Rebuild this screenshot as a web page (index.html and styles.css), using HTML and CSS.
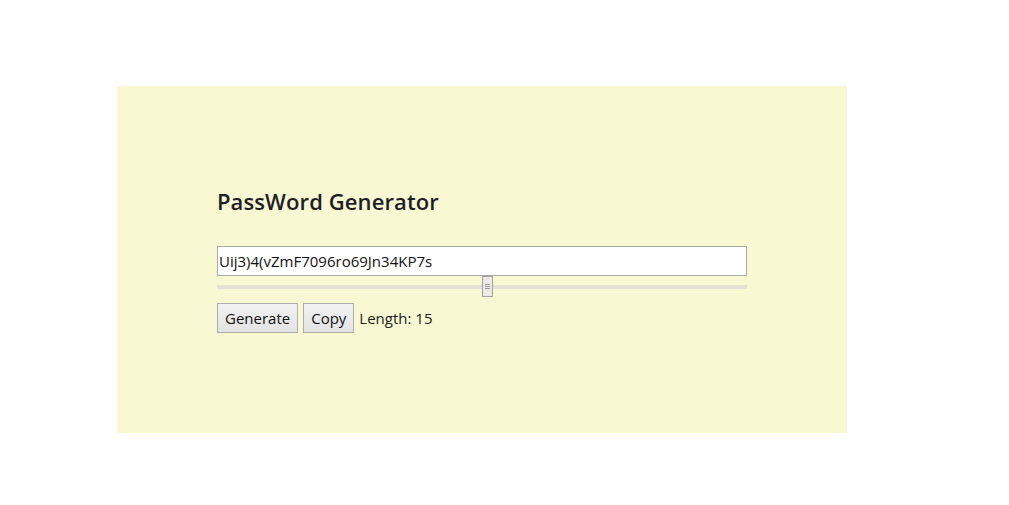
FILE: index.html
```html
<!DOCTYPE html>
<html lang="en">
<head>
<meta charset="utf-8">
<title>PassWord Generator</title>
<link rel="stylesheet" href="styles.css">
</head>
<body>
  <main class="panel">
    <h2 class="title">PassWord Generator</h2>
    <input class="password" type="text" value="Uij3)4(vZmF7096ro69Jn34KP7s" readonly>
    <input class="slider" type="range" min="0" max="29.4" step="0.1" value="15">
    <div class="actions">
      <button class="btn" type="button">Generate</button>
      <button class="btn" type="button">Copy</button>
      <span class="length">Length: 15</span>
    </div>
  </main>
</body>
</html>
```

FILE: styles.css
```css
* { box-sizing: border-box; }

html, body {
  margin: 0;
  padding: 0;
  background: #ffffff;
}

body {
  font-family: "Open Sans", "Noto Sans", "Liberation Sans", sans-serif;
  color: #222222;
  padding: 86px 0 0 117px;
}

.panel {
  width: 730px;
  height: 347px;
  background: #f8f8d3;
  padding: 100px;
  display: flex;
  flex-direction: column;
}

.title {
  margin: 0 0 29px 0;
  font-size: 22px;
  line-height: 31px;
  font-weight: 600;
  letter-spacing: 0.1px;
  color: #1e1e28;
}

.password {
  width: 530px;
  height: 30px;
  margin: 0;
  padding: 0 1px;
  border: 1px solid #a9a9a9;
  background: #ffffff;
  font-family: inherit;
  font-size: 15px;
  color: #111111;
  outline: none;
}

.slider {
  -webkit-appearance: none;
  appearance: none;
  width: 530px;
  height: 21px;
  margin: 0 0 6px 0;
  padding: 0;
  background: transparent;
}

.slider::-webkit-slider-runnable-track {
  height: 4px;
  background: #e5e1d6;
  border: none;
}

.slider::-webkit-slider-thumb {
  -webkit-appearance: none;
  appearance: none;
  width: 11px;
  height: 21px;
  margin-top: -9px;
  border: 1px solid #a3a3a3;
  background:
    linear-gradient(#9a9a9a, #9a9a9a) center 7px / 5px 1px no-repeat,
    linear-gradient(#9a9a9a, #9a9a9a) center 9px / 5px 1px no-repeat,
    linear-gradient(#9a9a9a, #9a9a9a) center 11px / 5px 1px no-repeat,
    #ece9e6;
}

.actions {
  display: flex;
  align-items: center;
  gap: 5px;
}

.btn {
  height: 30px;
  margin: 0;
  padding: 0 7px;
  border: 1px solid #adadad;
  border-radius: 0;
  background: linear-gradient(#f2f2f2, #e3e3e3);
  font-family: inherit;
  font-size: 15px;
  color: #111111;
}

.length {
  font-size: 15px;
  color: #222222;
}
```
